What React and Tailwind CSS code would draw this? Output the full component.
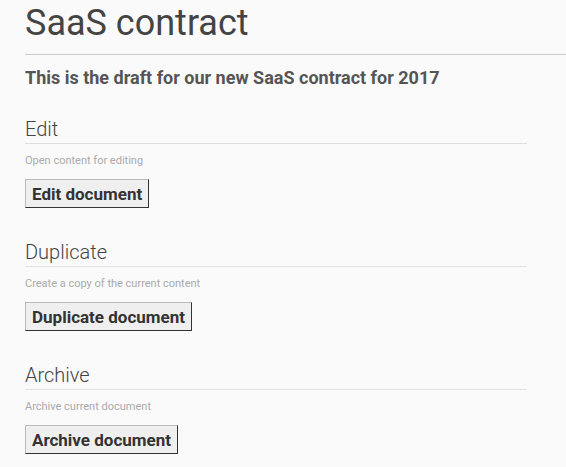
import React from "react";

const sections = [
  { title: "Edit", desc: "Open content for editing", btn: "Edit document" },
  { title: "Duplicate", desc: "Create a copy of the current content", btn: "Duplicate document" },
  { title: "Archive", desc: "Archive current document", btn: "Archive document" },
];

export default function App() {
  return (
    <div className="min-h-[467px] bg-[#fafafa] pl-[25px] text-[#444]" style={{ fontFamily: "Roboto, 'Liberation Sans', sans-serif" }}>
      <h1 className="pt-[2px] text-[36px] leading-[42px] font-normal text-[#444]">SaaS contract</h1>
      <div className="mt-[10px] h-px bg-[#cccccc]" />
      <p className="mt-[12px] text-[18px] leading-[22px] font-bold text-[#555]">This is the draft for our new SaaS contract for 2017</p>
      <div className="mt-[28px] flex w-[502px] flex-col">
        {sections.map((s) => (
          <section key={s.title} className="mb-[32px] flex flex-col">
            <h2 className="text-[20px] leading-[24px] font-light text-[#444]">{s.title}</h2>
            <div className="mt-[2px] h-px bg-[#e0e0e0]" />
            <p className="mt-[10px] text-[11px] leading-[13px] text-[#aaa]">{s.desc}</p>
            <div className="mt-[12px]">
              <button className="h-[29px] border border-t-[#bbb] border-l-[#bbb] border-r-[#333] border-b-[#333] bg-[#efefef] px-[6px] pt-[2px] text-[17px] font-bold text-[#333]">
                {s.btn}
              </button>
            </div>
          </section>
        ))}
      </div>
    </div>
  );
}
